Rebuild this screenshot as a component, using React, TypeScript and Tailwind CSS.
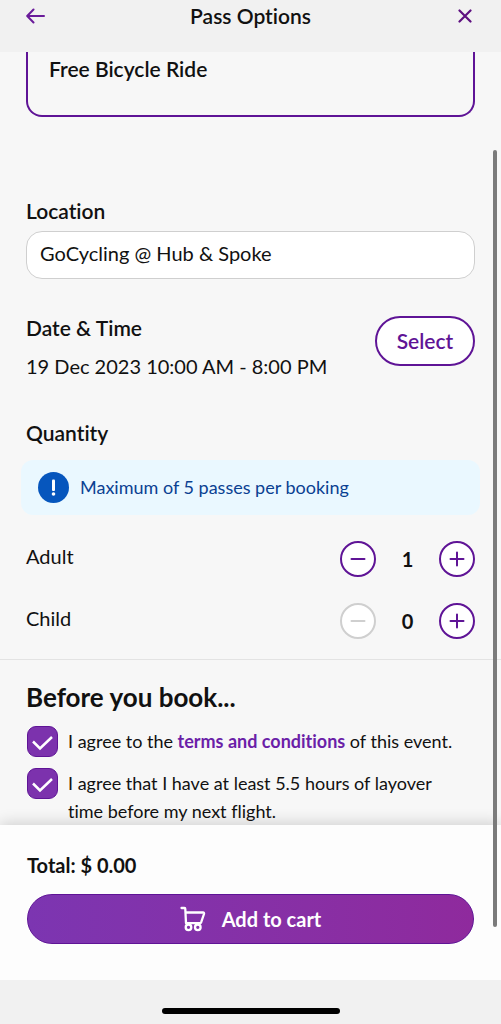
import { useState } from "react";
import type { ReactNode } from "react";

const initialCounts = { Adult: 1, Child: 0 };
type Category = keyof typeof initialCounts;

function ArrowLeft() {
  return (
    <svg width="20" height="16" viewBox="0 0 20 16" fill="none" stroke="#6a1b9a" strokeWidth="2" strokeLinecap="round" strokeLinejoin="round" aria-hidden="true">
      <path d="M18 8H1.500M7.500 1.500 1.200 8l6.300 6.500" />
    </svg>
  );
}

function Cross() {
  return (
    <svg width="14" height="14" viewBox="0 0 14 14" fill="none" stroke="#5e1080" strokeWidth="2.200" strokeLinecap="round" aria-hidden="true">
      <path d="M1.500 1.500l11 11M12.500 1.500l-11 11" />
    </svg>
  );
}

function Cart() {
  return (
    <svg width="26" height="26" viewBox="0 0 26 26" fill="none" stroke="#fff" strokeWidth="2.300" strokeLinecap="round" strokeLinejoin="round" aria-hidden="true">
      <path d="M1.500 2H4.500Q5.300 2 5.300 3L6 17.200H19.800Q20.800 17.200 21.200 16.200L24 8Q24.400 6.500 23 6.500H5.500" />
      <circle cx="8.500" cy="21.300" r="2.800" />
      <circle cx="17.800" cy="21.300" r="2.800" />
    </svg>
  );
}

function RoundButton({ kind, label, disabled, onClick }: { kind: "minus" | "plus"; label: string; disabled?: boolean; onClick: () => void }) {
  return (
    <button
      type="button"
      aria-label={label}
      disabled={disabled}
      onClick={onClick}
      className="flex size-9 items-center justify-center rounded-full border-2 border-[#5f1496] bg-white text-[#5f1496] disabled:border-[#cfcfcf] disabled:text-[#cfcfcf]"
    >
      <svg width="16" height="16" viewBox="0 0 16 16" fill="none" stroke="currentColor" strokeWidth="2" strokeLinecap="round" aria-hidden="true">
        <path d={kind === "plus" ? "M1.500 8h13M8 1.500v13" : "M1.500 8h13"} />
      </svg>
    </button>
  );
}

function Agreement({ id, children }: { id: string; children: ReactNode }) {
  return (
    <div className="flex items-start gap-[10px]">
      <span className="relative ml-px size-[31px] shrink-0">
        <input id={id} type="checkbox" defaultChecked className="peer block size-full appearance-none rounded-[9px] border border-[#5f1496] bg-white checked:bg-[#7c32ad]" />
        <svg viewBox="0 0 31 31" fill="none" stroke="#fff" strokeWidth="2.500" className="pointer-events-none absolute inset-0 hidden peer-checked:block" aria-hidden="true">
          <path d="M6 15.500l7 7L25 11" />
        </svg>
      </span>
      <label htmlFor={id} className="pt-px pr-5 text-lg leading-7">
        {children}
      </label>
    </div>
  );
}

export default function App() {
  const [counts, setCounts] = useState(initialCounts);
  const change = (name: Category, by: number) => setCounts((c) => ({ ...c, [name]: c[name] + by }));

  return (
    <div className="relative flex h-screen flex-col bg-[#f7f7f7] font-['Lato',sans-serif] text-xl leading-7 text-[#111] [font-variant-ligatures:none]">
      <header className="flex shrink-0 items-start justify-between bg-[#f1f1f1] px-[26px] pt-px pb-[21px]">
        <button type="button" aria-label="Back" className="flex h-[30px] w-5 items-center">
          <ArrowLeft />
        </button>
        <h1 className="text-[21px] leading-[30px] font-semibold">Pass Options</h1>
        <button type="button" aria-label="Close" className="flex h-[30px] w-5 items-center justify-center">
          <Cross />
        </button>
      </header>

      <main className="min-h-0 flex-1 overflow-y-auto [scrollbar-width:none]">
        <div className="px-[26px] pb-5">
          <section className="mb-20 rounded-b-2xl border-2 border-t-0 border-[#5f1496] px-[21px] pt-[3px] pb-8">
            <h2 className="text-[21px] leading-7 font-semibold">Free Bicycle Ride</h2>
          </section>

          <label htmlFor="location" className="block text-[21px] leading-7 font-semibold">
            Location
          </label>
          <input id="location" readOnly value="GoCycling @ Hub & Spoke" className="mt-[6px] block h-12 w-full rounded-2xl border border-[#cfcfcf] bg-white px-[13px] pb-1" />

          <section className="mt-[35px] flex items-start justify-between">
            <div>
              <h2 className="text-[21px] leading-7 font-semibold">Date &amp; Time</h2>
              <p className="mt-[10px]">19 Dec 2023 10:00 AM - 8:00 PM</p>
            </div>
            <button type="button" className="mt-[2px] h-[50px] w-[100px] rounded-full border-2 border-[#5f1496] bg-white text-[21px] font-semibold text-[#5f1496]">
              Select
            </button>
          </section>

          <section className="mt-[39px]">
            <h2 className="text-[21px] leading-7 font-semibold">Quantity</h2>
            <p className="-mx-[5px] mt-[13px] flex h-[55px] items-center gap-[11px] rounded-xl bg-[#eaf8ff] px-[17px] text-lg text-[#0a4192]">
              <svg width="31" height="31" viewBox="0 0 31 31" aria-hidden="true">
                <circle cx="15.500" cy="15.500" r="15.500" fill="#0656bd" />
                <rect x="14" y="7.500" width="3" height="11.500" rx="1" fill="#fff" />
                <circle cx="15.500" cy="22" r="1.800" fill="#fff" />
              </svg>
              <span className="pb-px">Maximum of 5 passes per booking</span>
            </p>
            <div className="mt-[26px] flex flex-col gap-[26px]">
              {(Object.keys(counts) as Category[]).map((name) => (
                <div key={name} className="flex h-9 justify-between">
                  <span className="pt-px">{name}</span>
                  <div className="flex items-center">
                    <RoundButton kind="minus" label={`Remove ${name}`} disabled={counts[name] === 0} onClick={() => change(name, -1)} />
                    <output className="w-[63px] pb-px text-center font-bold">{counts[name]}</output>
                    <RoundButton kind="plus" label={`Add ${name}`} onClick={() => change(name, 1)} />
                  </div>
                </div>
              ))}
            </div>
          </section>
        </div>

        <section className="border-t border-[#e3e3e3] px-[26px] pt-[21px]">
          <h2 className="text-[26px] leading-8 font-bold">Before you book...</h2>
          <div className="mt-[13px] flex flex-col gap-[11px]">
            <Agreement id="terms">
              I agree to the{" "}
              <a href="#terms" className="font-bold text-[#6b1fa8]">
                terms and conditions
              </a>{" "}
              of this event.
            </Agreement>
            <Agreement id="layover">I agree that I have at least 5.5 hours of layover time before my next flight.</Agreement>
          </div>
        </section>
      </main>

      <footer className="z-10 shrink-0 bg-[#fdfdfd] shadow-[0_-2px_14px_rgba(0,0,0,0.16)]">
        <div className="px-[27px] pt-[26px] pb-9">
          <p className="font-bold">Total: $ 0.00</p>
          <button type="button" className="mt-[15px] flex h-[50px] w-full items-center justify-center gap-4 rounded-full border border-[#5f1496] bg-linear-to-r from-[#7c35b1] to-[#8f2a9d] font-bold text-white">
            <Cart />
            Add to cart
          </button>
        </div>
        <div className="flex h-11 items-end justify-center bg-[#f1f1f1] pb-[10px]">
          <div className="h-[6px] w-[178px] rounded-full bg-black" />
        </div>
      </footer>

      <div className="absolute top-[150px] right-1 bottom-[97px] z-20 w-1 rounded-full bg-[#7b7b7b]" />
    </div>
  );
}
